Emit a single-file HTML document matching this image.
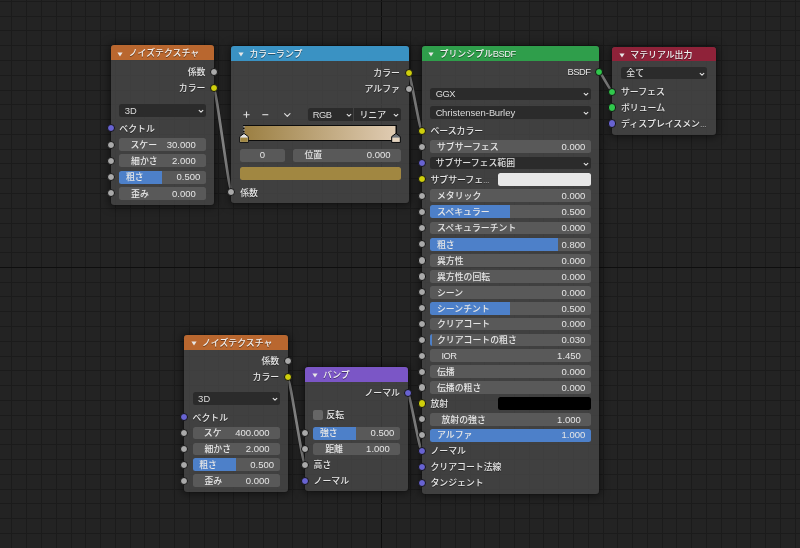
<!DOCTYPE html>
<html><head><meta charset="utf-8"><title>Node Editor</title>
<style>
html,body{margin:0;padding:0;background:#232323;overflow:hidden}
#root{position:relative;will-change:transform;width:800px;height:548px;background:#232323;overflow:hidden;font-family:"Liberation Sans","Noto Sans CJK JP",sans-serif;font-size:8.9px;font-weight:500;color:#e6e6e6;-webkit-font-smoothing:antialiased}
#root *{box-sizing:border-box}
.abs,.nd,.sk,.fd,.mn,.cv{position:absolute}
.tx{pointer-events:none}.sh{filter:drop-shadow(0 1px .35px rgba(0,0,0,.42))}.tx text{font-size:8.9px;font-weight:500;white-space:pre}.u{font-size:9.3px;letter-spacing:-.47px}.d{font-size:9.5px}.e{font-size:6.4px}
.nd{background:rgba(76,76,76,.72);border-radius:3.2px;box-shadow:0 0 0 .6px rgba(20,20,20,.55),0 .5px 9px 1.5px rgba(0,0,0,.5)}
.hd{position:absolute;left:0;top:0;right:0;border-radius:3.2px 3.2px 0 0}
.tri{position:absolute;left:6.8px;top:6.2px}
.sk{width:8.2px;height:8.2px;border-radius:50%;border:.7px solid #141414}
.fd{background:#595959;border-radius:2.5px;white-space:nowrap;overflow:hidden}
.mn{background:#2b2b2b;border-radius:2.5px;white-space:nowrap;overflow:hidden;color:#dcdcdc}
</style></head><body><div id="root">
<svg class="abs" style="left:0;top:0" width="800" height="548" viewBox="0 0 800 548" fill="none" stroke-width="1"><path d="M11.5 0V548" stroke="#1b1b1b"/><path d="M26.5 0V548" stroke="#1b1b1b"/><path d="M41.5 0V548" stroke="#1b1b1b"/><path d="M56.5 0V548" stroke="#1b1b1b"/><path d="M71.5 0V548" stroke="#1b1b1b"/><path d="M85.5 0V548" stroke="#1b1b1b"/><path d="M100.5 0V548" stroke="#1b1b1b"/><path d="M115.5 0V548" stroke="#1b1b1b"/><path d="M130.5 0V548" stroke="#1b1b1b"/><path d="M144.5 0V548" stroke="#1b1b1b"/><path d="M159.5 0V548" stroke="#1b1b1b"/><path d="M174.5 0V548" stroke="#1b1b1b"/><path d="M189.5 0V548" stroke="#1b1b1b"/><path d="M204.5 0V548" stroke="#1b1b1b"/><path d="M218.5 0V548" stroke="#1b1b1b"/><path d="M233.5 0V548" stroke="#1b1b1b"/><path d="M248.5 0V548" stroke="#1b1b1b"/><path d="M263.5 0V548" stroke="#1b1b1b"/><path d="M277.5 0V548" stroke="#1b1b1b"/><path d="M292.5 0V548" stroke="#1b1b1b"/><path d="M307.5 0V548" stroke="#1b1b1b"/><path d="M322.5 0V548" stroke="#1b1b1b"/><path d="M337.5 0V548" stroke="#1b1b1b"/><path d="M351.5 0V548" stroke="#1b1b1b"/><path d="M366.5 0V548" stroke="#1b1b1b"/><path d="M381.5 0V548" stroke="#0e0e0e"/><path d="M396.5 0V548" stroke="#1b1b1b"/><path d="M410.5 0V548" stroke="#1b1b1b"/><path d="M425.5 0V548" stroke="#1b1b1b"/><path d="M440.5 0V548" stroke="#1b1b1b"/><path d="M455.5 0V548" stroke="#1b1b1b"/><path d="M470.5 0V548" stroke="#1b1b1b"/><path d="M484.5 0V548" stroke="#1b1b1b"/><path d="M499.5 0V548" stroke="#1b1b1b"/><path d="M514.5 0V548" stroke="#1b1b1b"/><path d="M529.5 0V548" stroke="#1b1b1b"/><path d="M543.5 0V548" stroke="#1b1b1b"/><path d="M558.5 0V548" stroke="#1b1b1b"/><path d="M573.5 0V548" stroke="#1b1b1b"/><path d="M588.5 0V548" stroke="#1b1b1b"/><path d="M603.5 0V548" stroke="#1b1b1b"/><path d="M617.5 0V548" stroke="#1b1b1b"/><path d="M632.5 0V548" stroke="#1b1b1b"/><path d="M647.5 0V548" stroke="#1b1b1b"/><path d="M662.5 0V548" stroke="#1b1b1b"/><path d="M676.5 0V548" stroke="#1b1b1b"/><path d="M691.5 0V548" stroke="#1b1b1b"/><path d="M706.5 0V548" stroke="#1b1b1b"/><path d="M721.5 0V548" stroke="#1b1b1b"/><path d="M736.5 0V548" stroke="#1b1b1b"/><path d="M750.5 0V548" stroke="#1b1b1b"/><path d="M765.5 0V548" stroke="#1b1b1b"/><path d="M780.5 0V548" stroke="#1b1b1b"/><path d="M795.5 0V548" stroke="#1b1b1b"/><path d="M0 1.5H800" stroke="#1b1b1b"/><path d="M0 16.5H800" stroke="#1b1b1b"/><path d="M0 30.5H800" stroke="#1b1b1b"/><path d="M0 45.5H800" stroke="#1b1b1b"/><path d="M0 60.5H800" stroke="#1b1b1b"/><path d="M0 75.5H800" stroke="#1b1b1b"/><path d="M0 90.5H800" stroke="#1b1b1b"/><path d="M0 104.5H800" stroke="#1b1b1b"/><path d="M0 119.5H800" stroke="#1b1b1b"/><path d="M0 134.5H800" stroke="#1b1b1b"/><path d="M0 149.5H800" stroke="#1b1b1b"/><path d="M0 163.5H800" stroke="#1b1b1b"/><path d="M0 178.5H800" stroke="#1b1b1b"/><path d="M0 193.5H800" stroke="#1b1b1b"/><path d="M0 208.5H800" stroke="#1b1b1b"/><path d="M0 223.5H800" stroke="#1b1b1b"/><path d="M0 237.5H800" stroke="#1b1b1b"/><path d="M0 252.5H800" stroke="#1b1b1b"/><path d="M0 267.5H800" stroke="#0e0e0e"/><path d="M0 282.5H800" stroke="#1b1b1b"/><path d="M0 296.5H800" stroke="#1b1b1b"/><path d="M0 311.5H800" stroke="#1b1b1b"/><path d="M0 326.5H800" stroke="#1b1b1b"/><path d="M0 341.5H800" stroke="#1b1b1b"/><path d="M0 356.5H800" stroke="#1b1b1b"/><path d="M0 370.5H800" stroke="#1b1b1b"/><path d="M0 385.5H800" stroke="#1b1b1b"/><path d="M0 400.5H800" stroke="#1b1b1b"/><path d="M0 415.5H800" stroke="#1b1b1b"/><path d="M0 429.5H800" stroke="#1b1b1b"/><path d="M0 444.5H800" stroke="#1b1b1b"/><path d="M0 459.5H800" stroke="#1b1b1b"/><path d="M0 474.5H800" stroke="#1b1b1b"/><path d="M0 489.5H800" stroke="#1b1b1b"/><path d="M0 503.5H800" stroke="#1b1b1b"/><path d="M0 518.5H800" stroke="#1b1b1b"/><path d="M0 533.5H800" stroke="#1b1b1b"/><path d="M0 548.5H800" stroke="#1b1b1b"/></svg>
<svg class="abs" style="left:0;top:0" width="800" height="548" viewBox="0 0 800 548"><path d="M213.90 87.90 C216.00 87.90 229.30 192.20 231.40 192.20" stroke="#1c1c1c" stroke-width="3.8" fill="none"/><path d="M213.90 87.90 C216.00 87.90 229.30 192.20 231.40 192.20" stroke="#8a8a8a" stroke-width="2.7" fill="none"/><path d="M408.60 72.60 C410.16 72.60 420.04 130.70 421.60 130.70" stroke="#1c1c1c" stroke-width="3.8" fill="none"/><path d="M408.60 72.60 C410.16 72.60 420.04 130.70 421.60 130.70" stroke="#8a8a8a" stroke-width="2.7" fill="none"/><path d="M599.00 71.70 C600.60 71.70 610.70 91.60 612.30 91.60" stroke="#1c1c1c" stroke-width="3.8" fill="none"/><path d="M599.00 71.70 C600.60 71.70 610.70 91.60 612.30 91.60" stroke="#8a8a8a" stroke-width="2.7" fill="none"/><path d="M287.70 377.00 C289.76 377.00 302.84 464.90 304.90 464.90" stroke="#1c1c1c" stroke-width="3.8" fill="none"/><path d="M287.70 377.00 C289.76 377.00 302.84 464.90 304.90 464.90" stroke="#8a8a8a" stroke-width="2.7" fill="none"/><path d="M407.90 392.90 C409.54 392.90 419.96 451.10 421.60 451.10" stroke="#1c1c1c" stroke-width="3.8" fill="none"/><path d="M407.90 392.90 C409.54 392.90 419.96 451.10 421.60 451.10" stroke="#8a8a8a" stroke-width="2.7" fill="none"/></svg>
<div class="nd" style="left:110.70px;top:45.40px;width:103.20px;height:159.60px"><div class="hd" style="height:14.60px;background:#b9672f"><svg class="tri" width="6" height="5" viewBox="0 0 6 5"><path d="M0.4 0.5 L5.6 0.5 L3 4.6 Z" fill="#e6e6e6"/></svg></div></div>
<i class="sk" style="left:209.80px;top:67.80px;background:#aaaaaa"></i>
<i class="sk" style="left:209.80px;top:83.80px;background:#cfcf0c"></i>
<div class="mn" style="left:119.30px;top:103.90px;width:86.50px;height:12.70px"><svg class="cv" style="left:78.00px;top:2.95px" width="8" height="8" viewBox="-4 -4 8 8"><path d="M-1.85 -0.62 L0 1.23 L1.85 -0.62" fill="none" stroke="#e0e0e0" stroke-width="1.10" stroke-linecap="round" stroke-linejoin="round"/></svg></div>
<i class="sk" style="left:106.60px;top:124.20px;background:#6863d2"></i>
<i class="sk" style="left:106.60px;top:140.50px;background:#aaaaaa"></i>
<div class="fd" style="left:119.30px;top:138.09px;width:86.50px;height:13.02px;"></div>
<i class="sk" style="left:106.60px;top:156.80px;background:#aaaaaa"></i>
<div class="fd" style="left:119.30px;top:154.39px;width:86.50px;height:13.02px;"></div>
<i class="sk" style="left:106.60px;top:173.00px;background:#aaaaaa"></i>
<div class="fd" style="left:119.30px;top:170.59px;width:86.50px;height:13.02px;background:linear-gradient(90deg,#4d80c9 0,#4d80c9 42.55px,#595959 42.55px)"></div>
<i class="sk" style="left:106.60px;top:189.30px;background:#aaaaaa"></i>
<div class="fd" style="left:119.30px;top:186.89px;width:86.50px;height:13.02px;"></div>
<div class="nd" style="left:184.00px;top:335.30px;width:103.70px;height:156.40px"><div class="hd" style="height:14.60px;background:#b9672f"><svg class="tri" width="6" height="5" viewBox="0 0 6 5"><path d="M0.4 0.5 L5.6 0.5 L3 4.6 Z" fill="#e6e6e6"/></svg></div></div>
<i class="sk" style="left:283.60px;top:357.10px;background:#aaaaaa"></i>
<i class="sk" style="left:283.60px;top:372.90px;background:#cfcf0c"></i>
<div class="mn" style="left:192.60px;top:392.40px;width:87.00px;height:12.30px"><svg class="cv" style="left:78.50px;top:2.75px" width="8" height="8" viewBox="-4 -4 8 8"><path d="M-1.85 -0.62 L0 1.23 L1.85 -0.62" fill="none" stroke="#e0e0e0" stroke-width="1.10" stroke-linecap="round" stroke-linejoin="round"/></svg></div>
<i class="sk" style="left:179.90px;top:413.20px;background:#6863d2"></i>
<i class="sk" style="left:179.90px;top:429.00px;background:#aaaaaa"></i>
<div class="fd" style="left:192.60px;top:426.77px;width:87.00px;height:12.66px;"></div>
<i class="sk" style="left:179.90px;top:444.80px;background:#aaaaaa"></i>
<div class="fd" style="left:192.60px;top:442.57px;width:87.00px;height:12.66px;"></div>
<i class="sk" style="left:179.90px;top:460.70px;background:#aaaaaa"></i>
<div class="fd" style="left:192.60px;top:458.47px;width:87.00px;height:12.66px;background:linear-gradient(90deg,#4d80c9 0,#4d80c9 42.80px,#595959 42.80px)"></div>
<i class="sk" style="left:179.90px;top:476.50px;background:#aaaaaa"></i>
<div class="fd" style="left:192.60px;top:474.27px;width:87.00px;height:12.66px;"></div>
<div class="nd" style="left:231.40px;top:46.30px;width:177.40px;height:156.70px"><div class="hd" style="height:14.70px;background:#3a92c3"><svg class="tri" width="6" height="5" viewBox="0 0 6 5"><path d="M0.4 0.5 L5.6 0.5 L3 4.6 Z" fill="#e6e6e6"/></svg></div></div>
<i class="sk" style="left:404.50px;top:68.50px;background:#cfcf0c"></i>
<i class="sk" style="left:404.50px;top:84.60px;background:#aaaaaa"></i>
<svg class="abs" style="left:240px;top:108px" width="60" height="14" viewBox="0 0 60 14"><g stroke="#e0e0e0" stroke-width="1.1" fill="none" stroke-linecap="butt"><path d="M3.4 6.7H9.6M6.5 3.6V9.8"/><path d="M22.3 6.7H28.3"/><path d="M44.6 5.6L47.3 8.3L50 5.6" stroke-linecap="round" stroke-linejoin="round"/></g></svg>
<div class="mn" style="left:308.40px;top:108.40px;width:44.90px;height:12.60px;border-radius:2.5px 0 0 2.5px"><svg class="cv" style="left:36.40px;top:2.90px" width="8" height="8" viewBox="-4 -4 8 8"><path d="M-1.85 -0.62 L0 1.23 L1.85 -0.62" fill="none" stroke="#e0e0e0" stroke-width="1.10" stroke-linecap="round" stroke-linejoin="round"/></svg></div>
<div class="mn" style="left:353.90px;top:108.40px;width:46.70px;height:12.60px;border-radius:0 2.5px 2.5px 0"><svg class="cv" style="left:38.20px;top:2.90px" width="8" height="8" viewBox="-4 -4 8 8"><path d="M-1.85 -0.62 L0 1.23 L1.85 -0.62" fill="none" stroke="#e0e0e0" stroke-width="1.10" stroke-linecap="round" stroke-linejoin="round"/></svg></div>
<div class="abs" style="left:243.4px;top:125.3px;width:153.5px;height:15.4px;box-sizing:border-box;border:.7px solid #0c0c0c;background:linear-gradient(90deg,#9b7f42,#e0ccb3)"></div>
<svg class="abs" style="left:238.90px;top:124.5px" width="10" height="18" viewBox="0 0 10 18"><path d="M5 1V9" stroke="#0a0a0a" stroke-width="1"/><path d="M5 1V9" stroke="#eee" stroke-width="1" stroke-dasharray="1.6 1.6"/><path d="M5 8.4 L9.3 11.6 V17.4 H0.7 V11.6 Z" fill="#e4e4e4" stroke="#0a0a0a" stroke-width="1" stroke-linejoin="round"/><path d="M1.3 12.6 H8.7 V16.9 H1.3 Z" fill="#a18741"/></svg>
<svg class="abs" style="left:391.40px;top:124.5px" width="10" height="18" viewBox="0 0 10 18"><path d="M5 1V9" stroke="#0a0a0a" stroke-width="1"/><path d="M5 8.4 L9.3 11.6 V17.4 H0.7 V11.6 Z" fill="#6d7278" stroke="#0a0a0a" stroke-width="1" stroke-linejoin="round"/><path d="M1.3 12.6 H8.7 V16.9 H1.3 Z" fill="#e6d5bf"/></svg>
<div class="fd" style="left:240.20px;top:148.80px;width:44.60px;height:12.80px;"></div>
<div class="fd" style="left:292.50px;top:148.80px;width:108.10px;height:12.80px;"></div>
<div class="abs" style="left:240.2px;top:167px;width:160.6px;height:13px;border-radius:2.5px;background:#a18741"></div>
<i class="sk" style="left:227.30px;top:188.10px;background:#aaaaaa"></i>
<div class="nd" style="left:421.60px;top:46.20px;width:177.40px;height:447.80px"><div class="hd" style="height:14.70px;background:#2f9e4b"><svg class="tri" width="6" height="5" viewBox="0 0 6 5"><path d="M0.4 0.5 L5.6 0.5 L3 4.6 Z" fill="#e6e6e6"/></svg></div></div>
<i class="sk" style="left:594.90px;top:67.60px;background:#30c84c"></i>
<div class="mn" style="left:430.20px;top:87.50px;width:160.70px;height:12.50px"><svg class="cv" style="left:152.20px;top:2.85px" width="8" height="8" viewBox="-4 -4 8 8"><path d="M-1.85 -0.62 L0 1.23 L1.85 -0.62" fill="none" stroke="#e0e0e0" stroke-width="1.10" stroke-linecap="round" stroke-linejoin="round"/></svg></div>
<div class="mn" style="left:430.20px;top:106.00px;width:160.70px;height:12.50px"><svg class="cv" style="left:152.20px;top:2.85px" width="8" height="8" viewBox="-4 -4 8 8"><path d="M-1.85 -0.62 L0 1.23 L1.85 -0.62" fill="none" stroke="#e0e0e0" stroke-width="1.10" stroke-linecap="round" stroke-linejoin="round"/></svg></div>
<i class="sk" style="left:417.50px;top:126.60px;background:#cfcf0c"></i>
<i class="sk" style="left:417.50px;top:142.60px;background:#aaaaaa"></i>
<div class="fd" style="left:430.20px;top:140.30px;width:160.70px;height:12.80px;"></div>
<i class="sk" style="left:417.50px;top:159.00px;background:#6863d2"></i>
<div class="mn" style="left:430.20px;top:156.90px;width:160.70px;height:12.50px"><svg class="cv" style="left:152.20px;top:2.85px" width="8" height="8" viewBox="-4 -4 8 8"><path d="M-1.85 -0.62 L0 1.23 L1.85 -0.62" fill="none" stroke="#e0e0e0" stroke-width="1.10" stroke-linecap="round" stroke-linejoin="round"/></svg></div>
<i class="sk" style="left:417.50px;top:175.30px;background:#cfcf0c"></i>
<div class="abs" style="left:498.3px;top:173.10px;width:92.6px;height:12.6px;border-radius:2.5px;background:#e7e7e7"></div>
<i class="sk" style="left:417.50px;top:191.60px;background:#aaaaaa"></i>
<div class="fd" style="left:430.20px;top:189.30px;width:160.70px;height:12.80px;"></div>
<i class="sk" style="left:417.50px;top:207.70px;background:#aaaaaa"></i>
<div class="fd" style="left:430.20px;top:205.40px;width:160.70px;height:12.80px;background:linear-gradient(90deg,#4d80c9 0,#4d80c9 79.65px,#595959 79.65px)"></div>
<i class="sk" style="left:417.50px;top:223.80px;background:#aaaaaa"></i>
<div class="fd" style="left:430.20px;top:221.50px;width:160.70px;height:12.80px;"></div>
<i class="sk" style="left:417.50px;top:240.20px;background:#aaaaaa"></i>
<div class="fd" style="left:430.20px;top:237.90px;width:160.70px;height:12.80px;background:linear-gradient(90deg,#4d80c9 0,#4d80c9 127.86px,#595959 127.86px)"></div>
<i class="sk" style="left:417.50px;top:256.40px;background:#aaaaaa"></i>
<div class="fd" style="left:430.20px;top:254.10px;width:160.70px;height:12.80px;"></div>
<i class="sk" style="left:417.50px;top:272.40px;background:#aaaaaa"></i>
<div class="fd" style="left:430.20px;top:270.10px;width:160.70px;height:12.80px;"></div>
<i class="sk" style="left:417.50px;top:288.30px;background:#aaaaaa"></i>
<div class="fd" style="left:430.20px;top:286.00px;width:160.70px;height:12.80px;"></div>
<i class="sk" style="left:417.50px;top:304.10px;background:#aaaaaa"></i>
<div class="fd" style="left:430.20px;top:301.80px;width:160.70px;height:12.80px;background:linear-gradient(90deg,#4d80c9 0,#4d80c9 79.65px,#595959 79.65px)"></div>
<i class="sk" style="left:417.50px;top:320.00px;background:#aaaaaa"></i>
<div class="fd" style="left:430.20px;top:317.70px;width:160.70px;height:12.80px;"></div>
<i class="sk" style="left:417.50px;top:335.80px;background:#aaaaaa"></i>
<div class="fd" style="left:430.20px;top:333.50px;width:160.70px;height:12.80px;background:linear-gradient(90deg,#4d80c9 0,#4d80c9 2.41px,#595959 2.41px)"></div>
<i class="sk" style="left:417.50px;top:351.70px;background:#aaaaaa"></i>
<div class="fd" style="left:430.20px;top:349.40px;width:160.70px;height:12.80px;"></div>
<i class="sk" style="left:417.50px;top:367.60px;background:#aaaaaa"></i>
<div class="fd" style="left:430.20px;top:365.30px;width:160.70px;height:12.80px;"></div>
<i class="sk" style="left:417.50px;top:383.40px;background:#aaaaaa"></i>
<div class="fd" style="left:430.20px;top:381.10px;width:160.70px;height:12.80px;"></div>
<i class="sk" style="left:417.50px;top:399.40px;background:#cfcf0c"></i>
<div class="abs" style="left:498.3px;top:397.20px;width:92.6px;height:12.6px;border-radius:2.5px;background:#000000"></div>
<i class="sk" style="left:417.50px;top:415.20px;background:#aaaaaa"></i>
<div class="fd" style="left:430.20px;top:412.90px;width:160.70px;height:12.80px;"></div>
<i class="sk" style="left:417.50px;top:431.10px;background:#aaaaaa"></i>
<div class="fd" style="left:430.20px;top:428.80px;width:160.70px;height:12.80px;background:linear-gradient(90deg,#4d80c9 0,#4d80c9 160.70px,#595959 160.70px)"></div>
<i class="sk" style="left:417.50px;top:447.00px;background:#6863d2"></i>
<i class="sk" style="left:417.50px;top:462.80px;background:#6863d2"></i>
<i class="sk" style="left:417.50px;top:478.50px;background:#6863d2"></i>
<div class="nd" style="left:612.30px;top:46.70px;width:103.60px;height:88.10px"><div class="hd" style="height:14.70px;background:#8f2239"><svg class="tri" width="6" height="5" viewBox="0 0 6 5"><path d="M0.4 0.5 L5.6 0.5 L3 4.6 Z" fill="#e6e6e6"/></svg></div></div>
<div class="mn" style="left:620.80px;top:67.00px;width:86.20px;height:12.40px"><svg class="cv" style="left:77.70px;top:2.80px" width="8" height="8" viewBox="-4 -4 8 8"><path d="M-1.85 -0.62 L0 1.23 L1.85 -0.62" fill="none" stroke="#e0e0e0" stroke-width="1.10" stroke-linecap="round" stroke-linejoin="round"/></svg></div>
<i class="sk" style="left:608.20px;top:87.50px;background:#30c84c"></i>
<i class="sk" style="left:608.20px;top:103.47px;background:#30c84c"></i>
<i class="sk" style="left:608.20px;top:119.44px;background:#6863d2"></i>
<div class="nd" style="left:304.90px;top:366.90px;width:103.00px;height:124.50px"><div class="hd" style="height:14.70px;background:#7b56c6"><svg class="tri" width="6" height="5" viewBox="0 0 6 5"><path d="M0.4 0.5 L5.6 0.5 L3 4.6 Z" fill="#e6e6e6"/></svg></div></div>
<i class="sk" style="left:403.80px;top:388.80px;background:#6863d2"></i>
<div class="abs" style="left:313.4px;top:410px;width:9.8px;height:9.8px;border-radius:2px;background:#666"></div>
<div class="fd" style="left:313.40px;top:426.80px;width:86.50px;height:12.80px;background:linear-gradient(90deg,#4d80c9 0,#4d80c9 42.55px,#595959 42.55px)"></div>
<i class="sk" style="left:300.80px;top:429.10px;background:#aaaaaa"></i>
<div class="fd" style="left:313.40px;top:442.70px;width:86.50px;height:12.80px;"></div>
<i class="sk" style="left:300.80px;top:445.00px;background:#aaaaaa"></i>
<i class="sk" style="left:300.80px;top:460.80px;background:#aaaaaa"></i>
<i class="sk" style="left:300.80px;top:476.60px;background:#6863d2"></i>
<svg class="abs tx" style="left:0;top:0" width="800" height="548" viewBox="0 0 800 548"><g class="sh">
<text x="128.70" y="56" fill="#f0f0f0">ノイズテクスチャ</text>
<text x="205.40" y="75" text-anchor="end" fill="#e6e6e6">係数</text>
<text x="205.40" y="91" text-anchor="end" fill="#e6e6e6">カラー</text>
<text x="119.30" y="132" fill="#e6e6e6">ベクトル</text>
<text x="202.00" y="346" fill="#f0f0f0">ノイズテクスチャ</text>
<text x="279.20" y="364" text-anchor="end" fill="#e6e6e6">係数</text>
<text x="279.20" y="380" text-anchor="end" fill="#e6e6e6">カラー</text>
<text x="192.60" y="421" fill="#e6e6e6">ベクトル</text>
<text x="249.40" y="57" fill="#f0f0f0">カラーランプ</text>
<text x="399.90" y="76" text-anchor="end" fill="#e6e6e6">カラー</text>
<text x="399.90" y="92" text-anchor="end" fill="#e6e6e6">アルファ</text>
<text x="240.20" y="196" fill="#e6e6e6">係数</text>
<text x="439.60" y="57" fill="#f0f0f0">プリンシプル<tspan class="u">BSDF</tspan></text>
<text x="590.50" y="75" text-anchor="end" fill="#e6e6e6"><tspan class="u">BSDF</tspan></text>
<text x="430.40" y="134" fill="#e6e6e6">ベースカラー</text>
<text x="430.40" y="183" fill="#e6e6e6">サブサーフェ<tspan class="e">…</tspan></text>
<text x="430.40" y="407" fill="#e6e6e6">放射</text>
<text x="430.40" y="454" fill="#e6e6e6">ノーマル</text>
<text x="430.40" y="470" fill="#e6e6e6">クリアコート法線</text>
<text x="430.40" y="486" fill="#e6e6e6">タンジェント</text>
<text x="630.30" y="58" fill="#f0f0f0">マテリアル出力</text>
<text x="621.00" y="95" fill="#e6e6e6">サーフェス</text>
<text x="621.00" y="111" fill="#e6e6e6">ボリューム</text>
<text x="621.00" y="127" fill="#e6e6e6">ディスプレイスメン<tspan class="e">…</tspan></text>
<text x="322.90" y="378" fill="#f0f0f0">バンプ</text>
<text x="400.00" y="396" text-anchor="end" fill="#e6e6e6">ノーマル</text>
<text x="326.30" y="418" fill="#e6e6e6">反転</text>
<text x="313.60" y="468" fill="#e6e6e6">高さ</text>
<text x="313.60" y="484" fill="#e6e6e6">ノーマル</text>
</g>
<text x="124.80" y="114" fill="#dcdcdc"><tspan class="d">3</tspan><tspan class="u">D</tspan></text>
<text x="130.50" y="148" fill="#e6e6e6">スケー</text>
<text x="195.80" y="148" text-anchor="end" fill="#e6e6e6"><tspan class="d">30.000</tspan></text>
<text x="131.10" y="164" fill="#e6e6e6">細かさ</text>
<text x="195.80" y="164" text-anchor="end" fill="#e6e6e6"><tspan class="d">2.000</tspan></text>
<text x="125.90" y="180" fill="#e6e6e6">粗さ</text>
<text x="200.30" y="180" text-anchor="end" fill="#e6e6e6"><tspan class="d">0.500</tspan></text>
<text x="131.10" y="197" fill="#e6e6e6">歪み</text>
<text x="195.80" y="197" text-anchor="end" fill="#e6e6e6"><tspan class="d">0.000</tspan></text>
<text x="198.10" y="402" fill="#dcdcdc"><tspan class="d">3</tspan><tspan class="u">D</tspan></text>
<text x="203.80" y="436" fill="#e6e6e6">スケ</text>
<text x="269.60" y="436" text-anchor="end" fill="#e6e6e6"><tspan class="d">400.000</tspan></text>
<text x="204.40" y="452" fill="#e6e6e6">細かさ</text>
<text x="269.60" y="452" text-anchor="end" fill="#e6e6e6"><tspan class="d">2.000</tspan></text>
<text x="199.20" y="468" fill="#e6e6e6">粗さ</text>
<text x="274.10" y="468" text-anchor="end" fill="#e6e6e6"><tspan class="d">0.500</tspan></text>
<text x="204.40" y="484" fill="#e6e6e6">歪み</text>
<text x="269.60" y="484" text-anchor="end" fill="#e6e6e6"><tspan class="d">0.000</tspan></text>
<text x="312.70" y="118" fill="#dcdcdc"><tspan class="u">RGB</tspan></text>
<text x="359.50" y="118" fill="#dcdcdc">リニア</text>
<text x="262.50" y="158" text-anchor="middle" fill="#e6e6e6"><tspan class="d">0</tspan></text>
<text x="304.40" y="158" fill="#e6e6e6">位置</text>
<text x="390.60" y="158" text-anchor="end" fill="#e6e6e6"><tspan class="d">0.000</tspan></text>
<text x="435.70" y="97" fill="#dcdcdc"><tspan class="u">GGX</tspan></text>
<text x="435.70" y="116" fill="#dcdcdc"><tspan class="u">C</tspan><tspan class="d">hristensen-</tspan><tspan class="u">B</tspan><tspan class="d">urley</tspan></text>
<text x="437.00" y="150" fill="#e6e6e6">サブサーフェス</text>
<text x="585.30" y="150" text-anchor="end" fill="#e6e6e6"><tspan class="d">0.000</tspan></text>
<text x="435.70" y="166" fill="#dcdcdc">サブサーフェス範囲</text>
<text x="437.00" y="199" fill="#e6e6e6">メタリック</text>
<text x="585.30" y="199" text-anchor="end" fill="#e6e6e6"><tspan class="d">0.000</tspan></text>
<text x="437.00" y="215" fill="#e6e6e6">スペキュラー</text>
<text x="585.30" y="215" text-anchor="end" fill="#e6e6e6"><tspan class="d">0.500</tspan></text>
<text x="437.00" y="231" fill="#e6e6e6">スペキュラーチント</text>
<text x="585.30" y="231" text-anchor="end" fill="#e6e6e6"><tspan class="d">0.000</tspan></text>
<text x="437.00" y="248" fill="#e6e6e6">粗さ</text>
<text x="585.30" y="248" text-anchor="end" fill="#e6e6e6"><tspan class="d">0.800</tspan></text>
<text x="437.00" y="264" fill="#e6e6e6">異方性</text>
<text x="585.30" y="264" text-anchor="end" fill="#e6e6e6"><tspan class="d">0.000</tspan></text>
<text x="437.00" y="280" fill="#e6e6e6">異方性の回転</text>
<text x="585.30" y="280" text-anchor="end" fill="#e6e6e6"><tspan class="d">0.000</tspan></text>
<text x="437.00" y="296" fill="#e6e6e6">シーン</text>
<text x="585.30" y="296" text-anchor="end" fill="#e6e6e6"><tspan class="d">0.000</tspan></text>
<text x="437.00" y="312" fill="#e6e6e6">シーンチント</text>
<text x="585.30" y="312" text-anchor="end" fill="#e6e6e6"><tspan class="d">0.500</tspan></text>
<text x="437.00" y="327" fill="#e6e6e6">クリアコート</text>
<text x="585.30" y="327" text-anchor="end" fill="#e6e6e6"><tspan class="d">0.000</tspan></text>
<text x="437.00" y="343" fill="#e6e6e6">クリアコートの粗さ</text>
<text x="585.30" y="343" text-anchor="end" fill="#e6e6e6"><tspan class="d">0.030</tspan></text>
<text x="441.40" y="359" fill="#e6e6e6"><tspan class="u">IOR</tspan></text>
<text x="580.90" y="359" text-anchor="end" fill="#e6e6e6"><tspan class="d">1.450</tspan></text>
<text x="437.00" y="375" fill="#e6e6e6">伝播</text>
<text x="585.30" y="375" text-anchor="end" fill="#e6e6e6"><tspan class="d">0.000</tspan></text>
<text x="437.00" y="391" fill="#e6e6e6">伝播の粗さ</text>
<text x="585.30" y="391" text-anchor="end" fill="#e6e6e6"><tspan class="d">0.000</tspan></text>
<text x="441.40" y="423" fill="#e6e6e6">放射の強さ</text>
<text x="580.90" y="423" text-anchor="end" fill="#e6e6e6"><tspan class="d">1.000</tspan></text>
<text x="437.00" y="438" fill="#e6e6e6">アルファ</text>
<text x="585.30" y="438" text-anchor="end" fill="#e6e6e6"><tspan class="d">1.000</tspan></text>
<text x="626.30" y="76" fill="#dcdcdc">全て</text>
<text x="320.00" y="436" fill="#e6e6e6">強さ</text>
<text x="394.40" y="436" text-anchor="end" fill="#e6e6e6"><tspan class="d">0.500</tspan></text>
<text x="325.20" y="452" fill="#e6e6e6">距離</text>
<text x="389.90" y="452" text-anchor="end" fill="#e6e6e6"><tspan class="d">1.000</tspan></text></svg>
</div></body></html>
